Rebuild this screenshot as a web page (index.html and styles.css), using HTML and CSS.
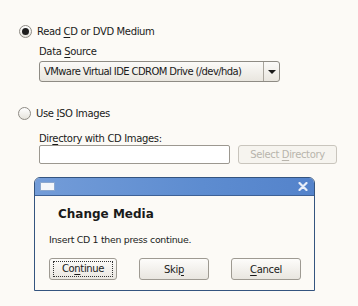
FILE: index.html
```html
<!DOCTYPE html>
<html lang="en">
<head>
    <meta charset="UTF-8">
    <title>Installation Medium</title>
    <link rel="stylesheet" href="styles.css">
</head>
<body>
    <div class="page">
        <div class="option">
            <span class="radio checked"></span>
            <span>Read <u>C</u>D or DVD Medium</span>
        </div>
        <div class="indent">
            <div class="label label-source">Data <u>S</u>ource</div>
            <div class="combo">
                <span class="combo-text">VMware Virtual IDE CDROM Drive (/dev/hda)</span>
                <span class="combo-arrow">
                    <svg width="8" height="4" viewBox="0 0 8 4"><path d="M0 0 H8 L4 4 Z" fill="#1a1a1a"/></svg>
                </span>
            </div>
        </div>

        <div class="option option-iso">
            <span class="radio"></span>
            <span>Use <u>I</u>SO Images</span>
        </div>
        <div class="indent">
            <div class="label label-dir">Dir<u>e</u>ctory with CD Images:</div>
            <div class="dir-row">
                <div class="entry"></div>
                <div class="btn btn-disabled"><span>Select <u>D</u>irectory</span></div>
            </div>
        </div>

        <div class="dialog">
            <div class="titlebar">
                <span class="win-icon"></span>
                <svg class="close" width="10" height="9" viewBox="0 0 10 9">
                    <path d="M1.5 1 L8.5 8 M8.5 1 L1.5 8" stroke="#e8eef8" stroke-width="2.2" stroke-linecap="round"/>
                </svg>
            </div>
            <div class="dialog-body">
                <h2>Change Media</h2>
                <p>Insert CD 1 then press continue.</p>
                <div class="buttons">
                    <div class="btn btn-focus"><span class="focus-ring">Co<u>n</u>tinue</span></div>
                    <div class="btn"><span>Ski<u>p</u></span></div>
                    <div class="btn"><span><u>C</u>ancel</span></div>
                </div>
            </div>
        </div>
    </div>
</body>
</html>
```

FILE: styles.css
```css
body {
    margin: 0;
    background-color: #fcfaf6;
    font-family: "DejaVu Sans", sans-serif;
    font-size: 10px;
    letter-spacing: -0.35px;
    color: #1a1a1a;
}
u {
    text-underline-offset: 2px;
}
.page {
    padding: 25px 0 0 19px;
}
.option {
    display: flex;
    align-items: center;
    gap: 5px;
    height: 13px;
}
.option-iso {
    margin-top: 25px;
    margin-left: -1px;
}
.radio {
    width: 11px;
    height: 11px;
    border: 1px solid #8e8b84;
    border-radius: 50%;
    background: linear-gradient(#ffffff, #e6e3dc);
    display: flex;
    align-items: center;
    justify-content: center;
}
.radio.checked::after {
    content: "";
    width: 7px;
    height: 7px;
    border-radius: 50%;
    background: #1e1e1e;
}
.indent {
    padding-left: 20px;
}
.label {
    height: 12px;
    line-height: 12px;
}
.label-source {
    margin-top: 8px;
}
.label-dir {
    margin-top: 13px;
}
.combo {
    margin-top: 3px;
    width: 239px;
    height: 19px;
    border: 1px solid #8e8b84;
    border-radius: 3px;
    background: linear-gradient(#fbfaf8, #e9e6df);
    display: flex;
    align-items: center;
}
.combo-text {
    flex: 1;
    padding-left: 4px;
    letter-spacing: -0.6px;
    white-space: nowrap;
    overflow: hidden;
}
.combo-arrow {
    width: 15px;
    height: 19px;
    border-left: 1px solid #a9a59d;
    display: flex;
    align-items: center;
    justify-content: center;
}
.dir-row {
    display: flex;
    gap: 8px;
}
.entry {
    width: 189px;
    height: 17px;
    border: 1px solid #9c9890;
    border-radius: 2px;
    background: #ffffff;
}
.btn {
    height: 19px;
    border: 1px solid #9e9a92;
    border-radius: 3px;
    background: linear-gradient(#fdfcfa, #e9e6e0);
    display: flex;
    align-items: center;
    justify-content: center;
    white-space: nowrap;
}
.btn-disabled {
    width: 97px;
    height: 17px;
    border-color: #c9c5bd;
    background: #f6f4ef;
    color: #b8b4ac;
}
.dialog {
    margin: 13px 0 0 15px;
    width: 279px;
    border: 1px solid #34547f;
    border-radius: 6px 6px 0 0;
    background: #fcfaf6;
}
.titlebar {
    height: 17px;
    border-radius: 5px 5px 0 0;
    background: linear-gradient(90deg, #739cd8, #5d8cd0 60%, #5483cb);
    border-bottom: 1px solid #3e6196;
    display: flex;
    align-items: center;
    justify-content: space-between;
    padding: 0 6px 0 5px;
}
.win-icon {
    width: 13px;
    height: 7px;
    border: 1px solid #8ba7cf;
    background: #f4f6fa;
}
.dialog-body {
    padding: 10px 0 10px 14px;
}
h2 {
    margin: 0 0 0 9px;
    font-size: 12px;
    font-weight: bold;
    letter-spacing: 0;
    line-height: 16px;
}
p {
    margin: 12px 0 0;
    font-size: 9.4px;
    letter-spacing: -0.3px;
    line-height: 12px;
}
.buttons {
    margin-top: 12px;
    display: flex;
    gap: 22px;
}
.buttons .btn {
    width: 68px;
    height: 20px;
}
.buttons .btn-focus {
    width: 66px;
}
.focus-ring {
    width: 58px;
    height: 14px;
    line-height: 14px;
    text-align: center;
    outline: 1px dotted #333;
}
```
